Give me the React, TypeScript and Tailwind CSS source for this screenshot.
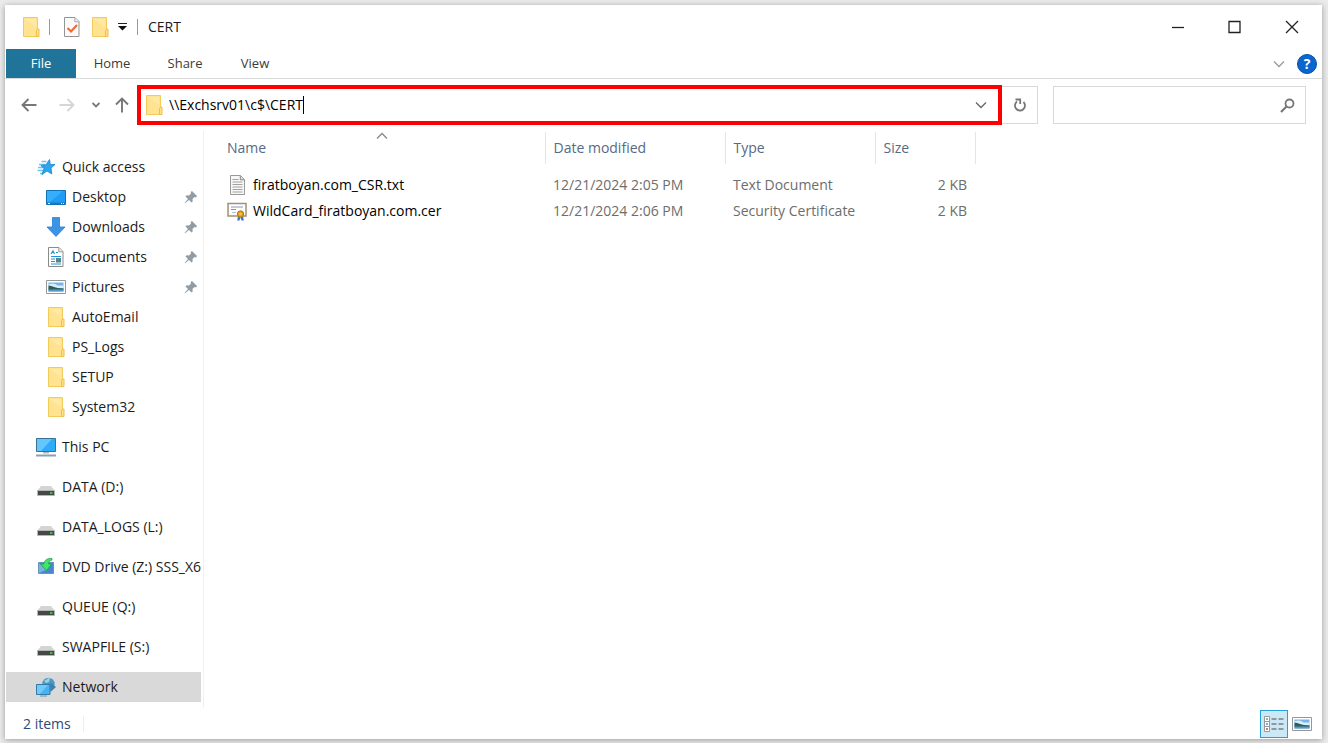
import { useState } from 'react';
import type { ReactNode } from 'react';
import { clsx } from 'clsx';

interface NavItem {
  label: string;
  icon: ReactNode;
  pinned?: boolean;
}

interface FileRow {
  name: string;
  icon: ReactNode;
  modified: string;
  type: string;
  size: string;
}

function FolderIcon() {
  return (
    <svg width="20" height="20" viewBox="0 0 20 20" aria-hidden="true">
      <path d="M2.5.5h14v19h-14z" fill="#ffe391" stroke="#f2cb58" />
      <path d="M4 2h11v8z" fill="#ffe9a6" />
      <path d="M15.5 19.5v-6l1-1.5h1.5v7.5z" fill="#ffdf82" stroke="#eec04a" />
    </svg>
  );
}

function PropertiesIcon() {
  return (
    <svg width="20" height="20" viewBox="0 0 20 20" aria-hidden="true">
      <path d="M2.5.5h10.5l4 4v15H2.5z" fill="#fbfafb" stroke="#949494" />
      <path d="M12.8.8v4h4" fill="#eee" stroke="#aaa" />
      <path d="m5.5 11 3.5 3.5 6-6.5" fill="none" stroke="#f36a32" strokeWidth="2.2" />
    </svg>
  );
}

function StarIcon() {
  return (
    <svg width="20" height="20" viewBox="0 0 20 20" aria-hidden="true">
      <path d="M5.5 4.500h5M3 7.500h6M2 10.500h6M1.500 13.500h6M4 16.500h3" stroke="#6cc4f3" strokeWidth="1.400" />
      <path
        d="m13.500 2.500.8 5h4.700l-4 3.500.8 6-4.800-3-5 3.500 2-6L5 8.500l5-.8z"
        fill="#2ea6ee"
        stroke="#1683c9"
        strokeWidth=".8"
      />
    </svg>
  );
}

function DesktopIcon() {
  return (
    <svg width="20" height="20" viewBox="0 0 20 20" aria-hidden="true">
      <path d="M.5 3.500h19v14H.5z" fill="#1e9df5" stroke="#1272b8" />
      <path d="M1 4h16L4 15H1z" fill="#35aefb" />
      <path d="M1 15.500h18V17H1z" fill="#1c79bd" />
      <path d="M2 16.500h2M15 16.500h1M17 16.500h1" stroke="#e2f3ff" />
    </svg>
  );
}

function DownloadIcon() {
  return (
    <svg width="20" height="20" viewBox="0 0 20 20" aria-hidden="true">
      <path d="M6.500.5h7v9.500h5.500l-9 9.500-9-9.500h5.500z" fill="#3b94e4" stroke="#2a7fd0" strokeWidth=".8" />
    </svg>
  );
}

function DocumentIcon() {
  return (
    <svg width="20" height="20" viewBox="0 0 20 20" aria-hidden="true">
      <path d="M2.500.5h10.500l4 4v15H2.500z" fill="#fff" stroke="#8b8b8b" />
      <path d="M12.800.8v4h4" fill="#eee" stroke="#999" />
      <path d="m5 7 2-3 1.500 3M10 5.500h2M5 9.500h10M5 12h4M5 14.500h4M5 17h10" fill="none" stroke="#2a91cf" strokeWidth="1.200" />
      <path d="M10 11h5v4.500h-5z" fill="#4d8794" />
    </svg>
  );
}

function PictureIcon() {
  return (
    <svg width="20" height="20" viewBox="0 0 20 20" aria-hidden="true">
      <path d="M.5 3.500h19v13H.5z" fill="#fff" stroke="#979797" />
      <path d="M2.500 5.500h15v9h-15z" fill="#77b4e8" />
      <path d="M2.500 7.500c4-2 7-.5 9 1h6V11h-15z" fill="#dbedf8" />
      <path d="M2.500 8.500c4 .5 6 2.500 15 3V13h-15z" fill="#2b5f58" />
      <path d="M2.500 12.500h15v2h-15z" fill="#5b98c6" />
    </svg>
  );
}

function ComputerIcon() {
  return (
    <svg width="20" height="20" viewBox="0 0 20 20" aria-hidden="true">
      <path d="M.5 1.500h19v13H.5z" fill="#2eacf9" stroke="#397392" />
      <path d="M1 2h15L5 14H1z" fill="#65c6fd" />
      <path d="M7 15h6v1.500H7z" fill="#a7bac7" />
      <path d="M0 18.500h20" stroke="#8ba1b3" strokeWidth="2" />
    </svg>
  );
}

function DriveIcon() {
  return (
    <svg width="20" height="20" viewBox="0 0 20 20" aria-hidden="true">
      <path d="M5 9h10l3.500 4.500h-17z" fill="#d4d4d4" />
      <path d="M1.500 13.500h17v5h-17z" fill="#444846" stroke="#b5b5b5" />
      <path d="M14 16h2.500" stroke="#41e34b" strokeWidth="1.500" />
    </svg>
  );
}

function DvdIcon() {
  return (
    <svg width="20" height="20" viewBox="0 0 20 20" aria-hidden="true">
      <path d="M2.500 5.500h15v11h-15z" fill="#4687ce" stroke="#6795bd" />
      <path d="m3 6 7 7-7 3z" fill="#79b1e5" />
      <path d="M16 1.500C11 1 8 3.500 8 7H4.500l6 6.500 5-6.500h-3c0-2 1-3.500 3.500-4z" fill="#40e56c" stroke="#2aa551" strokeWidth=".8" />
    </svg>
  );
}

function NetworkIcon() {
  return (
    <svg width="20" height="20" viewBox="0 0 20 20" aria-hidden="true">
      <circle cx="12.500" cy="7" r="6.200" fill="#4c98c4" />
      <path d="M8 4c4-2 3-3 6-3l-1 4-3 1z" fill="#9ed0e5" />
      <path d="M14.500 5.500 20 10l-5.500 5z" fill="#3d7fae" />
      <path d="M.5 7.500H14v10H.5z" fill="#45b2f1" stroke="#337aa7" />
      <path d="M1 8h11l-8 9H1z" fill="#70cafa" />
      <path d="M4 19h7" stroke="#8badc4" strokeWidth="1.500" />
    </svg>
  );
}

function TextFileIcon() {
  return (
    <svg width="20" height="20" viewBox="0 0 20 20" aria-hidden="true">
      <path d="M3.500.5h10l4 4v15h-14z" fill="#f7f7f7" stroke="#999" />
      <path d="M13.300.8v4h4" fill="#ddd" stroke="#888" />
      <path d="M5.500 4.500h6M5.500 7h10M5.500 9.500h10M5.500 12h10M5.500 14.500h10M5.500 17h10" stroke="#a2a2a2" />
    </svg>
  );
}

function CertificateIcon() {
  return (
    <svg width="20" height="20" viewBox="0 0 20 20" aria-hidden="true">
      <path d="M1 2.500h18v12.500H1z" fill="#fff" stroke="#a29175" strokeWidth="1.500" />
      <path d="M4 6h12M4 8.500h5" stroke="#8796bd" />
      <path d="M5 11.500h4" stroke="#b6bed1" />
      <path d="m11 15-.8 4.500h2.300l1-3zm5 0 .8 4.500h-2.300l-1-3z" fill="#3b75d0" />
      <circle cx="13.500" cy="13" r="3.200" fill="#dfa319" stroke="#b67a0b" />
      <circle cx="13.500" cy="13" r="1.200" fill="#f4cc5a" />
    </svg>
  );
}

function PinIcon() {
  return (
    <svg width="14" height="14" viewBox="0 0 14 14" aria-hidden="true">
      <path d="m8 1 5 5-1 1.500-1.500-.5-2 2 .2 2.500-1.200 1L5 10 1 13.300.5 13 4 9 1.500 6.500l1-1.200 2.500.2 2-2L6.700 2z" fill="#929ca4" />
    </svg>
  );
}

function Chevron({ up = false }: { up?: boolean }) {
  return (
    <svg width="12" height="12" viewBox="0 0 12 12" fill="none" stroke="currentColor" strokeWidth="1.3" aria-hidden="true">
      <path d={up ? 'M1 8.500 6 3.500l5 5' : 'm1 3.500 5 5 5-5'} />
    </svg>
  );
}

function Arrow({ className }: { className?: string }) {
  return (
    <svg width="16" height="16" viewBox="0 0 16 16" fill="none" stroke="currentColor" strokeWidth="1.9" className={className} aria-hidden="true">
      <path d="M15.500 8H1.500M7.500 2l-6 6 6 6" />
    </svg>
  );
}

const QUICK_ACCESS: NavItem[] = [
  { label: 'Desktop', icon: <DesktopIcon />, pinned: true },
  { label: 'Downloads', icon: <DownloadIcon />, pinned: true },
  { label: 'Documents', icon: <DocumentIcon />, pinned: true },
  { label: 'Pictures', icon: <PictureIcon />, pinned: true },
  { label: 'AutoEmail', icon: <FolderIcon /> },
  { label: 'PS_Logs', icon: <FolderIcon /> },
  { label: 'SETUP', icon: <FolderIcon /> },
  { label: 'System32', icon: <FolderIcon /> },
];

const LOCATIONS: NavItem[] = [
  { label: 'This PC', icon: <ComputerIcon /> },
  { label: 'DATA (D:)', icon: <DriveIcon /> },
  { label: 'DATA_LOGS (L:)', icon: <DriveIcon /> },
  { label: 'DVD Drive (Z:) SSS_X6', icon: <DvdIcon /> },
  { label: 'QUEUE (Q:)', icon: <DriveIcon /> },
  { label: 'SWAPFILE (S:)', icon: <DriveIcon /> },
  { label: 'Network', icon: <NetworkIcon /> },
];

const FILES: FileRow[] = [
  {
    name: 'firatboyan.com_CSR.txt',
    icon: <TextFileIcon />,
    modified: '12/21/2024 2:05 PM',
    type: 'Text Document',
    size: '2 KB',
  },
  {
    name: 'WildCard_firatboyan.com.cer',
    icon: <CertificateIcon />,
    modified: '12/21/2024 2:06 PM',
    type: 'Security Certificate',
    size: '2 KB',
  },
];

function TitleBar() {
  return (
    <header className="flex h-11 shrink-0 items-center pl-4">
      <FolderIcon />
      <span className="mx-2 h-4 w-px bg-[#9a9a9a]" />
      <div className="flex items-center gap-2 pl-1">
        <button type="button" aria-label="Properties">
          <PropertiesIcon />
        </button>
        <button type="button" aria-label="New folder">
          <FolderIcon />
        </button>
        <button type="button" aria-label="Customize Quick Access Toolbar">
          <svg width="9" height="8" viewBox="0 0 9 8" aria-hidden="true">
            <path d="M0 .5h9" stroke="#222" />
            <path d="M0 3h9L4.500 7.500z" fill="#111" />
          </svg>
        </button>
      </div>
      <span className="mx-[10px] h-4 w-px bg-[#9a9a9a]" />
      <h1>CERT</h1>
      <div className="ml-auto flex items-center gap-[43px] pr-[23px] text-[#222]">
        <button type="button" aria-label="Minimize">
          <svg width="14" height="14" viewBox="0 0 14 14" stroke="currentColor" aria-hidden="true">
            <path d="M1 7.500h12" strokeWidth="1.300" />
          </svg>
        </button>
        <button type="button" aria-label="Maximize">
          <svg width="14" height="14" viewBox="0 0 14 14" fill="none" stroke="currentColor" aria-hidden="true">
            <path d="M1 1.500h11v11H1z" strokeWidth="1.300" />
          </svg>
        </button>
        <button type="button" aria-label="Close">
          <svg width="14" height="14" viewBox="0 0 14 14" stroke="currentColor" aria-hidden="true">
            <path d="m1 1 12 12M13 1 1 13" strokeWidth="1.300" />
          </svg>
        </button>
      </div>
    </header>
  );
}

function RibbonTabs() {
  return (
    <nav className="flex h-[30px] shrink-0 items-stretch border-b border-[#dadbdc] pl-px text-[13px] text-[#3b3b3b]">
      <button type="button" className="w-[70px] bg-[#217499] text-white">
        File
      </button>
      <button type="button" className="w-[72px]">
        Home
      </button>
      <button type="button" className="w-[74px]">
        Share
      </button>
      <button type="button" className="w-[66px]">
        View
      </button>
      <div className="ml-auto flex items-center gap-3 pr-[5px]">
        <button type="button" aria-label="Expand the Ribbon" className="text-[#9b9b9b]">
          <Chevron />
        </button>
        <button
          type="button"
          aria-label="Help"
          className="size-5 rounded-full border border-[#0a4fa5] bg-[#0a66cf] text-sm leading-4 font-bold text-white"
        >
          ?
        </button>
      </div>
    </nav>
  );
}

function AddressRow() {
  const [path, setPath] = useState('\\\\Exchsrv01\\c$\\CERT');
  const [query, setQuery] = useState('');

  return (
    <div className="flex h-[52px] shrink-0 items-center pr-4 pl-4">
      <div className="flex w-[116px] items-center text-[#777]">
        <button type="button" aria-label="Back" className="mr-[22px]">
          <Arrow />
        </button>
        <button type="button" aria-label="Forward" className="mr-[17px] text-[#d6d6d6]">
          <Arrow className="rotate-180" />
        </button>
        <button type="button" aria-label="Recent locations" className="mr-[14px]">
          <svg width="8" height="8" viewBox="0 0 8 8" fill="none" stroke="currentColor" strokeWidth="1.8" aria-hidden="true">
            <path d="m.5 2 3.500 3.500L7.500 2" />
          </svg>
        </button>
        <button type="button" aria-label="Up">
          <Arrow className="rotate-90" />
        </button>
      </div>
      <div className="flex h-10 min-w-0 flex-1 items-center border-4 border-[#fe0000] pr-[11px] pl-[3px]">
        <FolderIcon />
        <input
          aria-label="Address"
          value={path}
          onChange={(e) => setPath(e.target.value)}
          spellCheck={false}
          className="ml-[5px] field-sizing-content bg-transparent text-black outline-none"
        />
        <span className="h-[18px] w-px bg-black" />
        <button type="button" aria-label="Previous locations" className="ml-auto text-[#666]">
          <Chevron />
        </button>
      </div>
      <button
        type="button"
        aria-label="Refresh"
        className="flex h-[38px] w-9 items-center justify-center border border-l-0 border-[#d9d9d9] text-[#777]"
      >
        <svg width="14" height="16" viewBox="0 0 14 16" fill="none" stroke="currentColor" strokeWidth="1.8" aria-hidden="true">
          <path d="M10.500 5A5 5 0 1 1 4 4.500M2.500 2.500h4.700v4.500" />
        </svg>
      </button>
      <div className="ml-[15px] flex h-[38px] w-[253px] items-center border border-[#d9d9d9] pr-[10px]">
        <input
          aria-label="Search CERT"
          value={query}
          onChange={(e) => setQuery(e.target.value)}
          className="min-w-0 flex-1 bg-transparent px-2 outline-none"
        />
        <button type="button" aria-label="Search" className="text-[#777]">
          <svg width="15" height="15" viewBox="0 0 15 15" fill="none" stroke="currentColor" aria-hidden="true">
            <circle cx="9.500" cy="5.500" r="4" strokeWidth="1.800" />
            <path d="M6.500 8.500 1 14" strokeWidth="2.200" />
          </svg>
        </button>
      </div>
    </div>
  );
}

function NavButton({ item, nested = false, active = false }: { item: NavItem; nested?: boolean; active?: boolean }) {
  return (
    <button
      type="button"
      className={clsx(
        'flex h-[30px] w-full items-center gap-[6px] text-left whitespace-nowrap',
        nested ? 'pl-10' : 'pl-[30px]',
        active && 'bg-[#d9d9d9]',
      )}
    >
      <span className="shrink-0">{item.icon}</span>
      <span>{item.label}</span>
      {item.pinned && (
        <span className="mr-[3px] ml-auto">
          <PinIcon />
        </span>
      )}
    </button>
  );
}

function Sidebar() {
  return (
    <aside className="w-[199px] shrink-0 border-r border-[#f0f0f0] pt-[21px] pr-[2px] pl-px">
      <NavButton item={{ label: 'Quick access', icon: <StarIcon /> }} />
      {QUICK_ACCESS.map((item) => (
        <NavButton key={item.label} item={item} nested />
      ))}
      <div className="mt-[10px] flex flex-col gap-[10px]">
        {LOCATIONS.map((item) => (
          <NavButton key={item.label} item={item} active={item.label === 'Network'} />
        ))}
      </div>
    </aside>
  );
}

function FileTable() {
  return (
    <main className="min-w-0 flex-1 pt-px pl-[15px]">
      <table className="w-full table-fixed">
        <colgroup>
          <col className="w-[326px]" />
          <col className="w-[180px]" />
          <col className="w-[150px]" />
          <col className="w-[100px]" />
          <col />
        </colgroup>
        <thead className="text-left text-[#566a85]">
          <tr className="h-8">
            <th className="relative border-r border-[#e5e5e5] px-2 font-normal">
              Name
              <span className="absolute -top-[2px] left-1/2 -translate-x-1/2 text-[#888]">
                <Chevron up />
              </span>
            </th>
            <th className="border-r border-[#e5e5e5] px-2 font-normal">Date modified</th>
            <th className="border-r border-[#e5e5e5] px-2 font-normal">Type</th>
            <th className="border-r border-[#e5e5e5] px-2 font-normal">Size</th>
            <td />
          </tr>
        </thead>
        <tbody className="text-[#6d6d6d] before:block before:h-2">
          {FILES.map((f) => (
            <tr key={f.name} className="h-[26px]">
              <td className="px-2">
                <div className="flex items-center gap-[6px] text-black">
                  {f.icon}
                  {f.name}
                </div>
              </td>
              <td className="px-2">{f.modified}</td>
              <td className="px-2">{f.type}</td>
              <td className="px-2 text-right">{f.size}</td>
              <td />
            </tr>
          ))}
        </tbody>
      </table>
    </main>
  );
}

function StatusBar() {
  return (
    <footer className="flex h-[31px] shrink-0 items-center pr-[10px] pl-[18px] text-[#2f4a73]">
      <span>{FILES.length} items</span>
      <span className="ml-3 h-4 w-px bg-[#eee]" />
      <div className="ml-auto flex items-center gap-1">
        <button
          type="button"
          aria-label="Details view"
          className="flex h-7 w-7 items-center justify-center border border-[#26a0da] bg-[#cbe8f6]"
        >
          <svg width="20" height="18" viewBox="0 0 20 18" aria-hidden="true">
            <path d="M.5 1.500h5v5h-5zm0 5h5v5h-5zm0 5h5v5h-5z" fill="#fff" stroke="#999" />
            <path d="M2 4h2" stroke="#63a06c" strokeWidth="1.500" />
            <path d="M2 9h2" stroke="#4c86e0" strokeWidth="1.500" />
            <path d="M2 14h2" stroke="#de4037" strokeWidth="1.500" />
            <path d="M7.500 4h5M14.500 4h5M7.500 9h5M14.500 9h5M7.500 14h5M14.500 14h5" stroke="#7d7d7d" strokeWidth="1.300" />
          </svg>
        </button>
        <button type="button" aria-label="Large icons view">
          <PictureIcon />
        </button>
      </div>
    </footer>
  );
}

export default function App() {
  return (
    <div className="flex min-h-screen flex-col bg-[#ebebeb] pt-[5px] pr-[6px] pb-1 pl-[5px] font-['Open_Sans','Noto_Sans',sans-serif] text-sm text-[#1b1b1b]">
      <div className="flex flex-1 flex-col bg-white shadow-[0_1px_6px_rgba(0,0,0,0.35)]">
        <TitleBar />
        <RibbonTabs />
        <AddressRow />
        <div className="flex flex-1">
          <Sidebar />
          <FileTable />
        </div>
        <StatusBar />
      </div>
    </div>
  );
}
